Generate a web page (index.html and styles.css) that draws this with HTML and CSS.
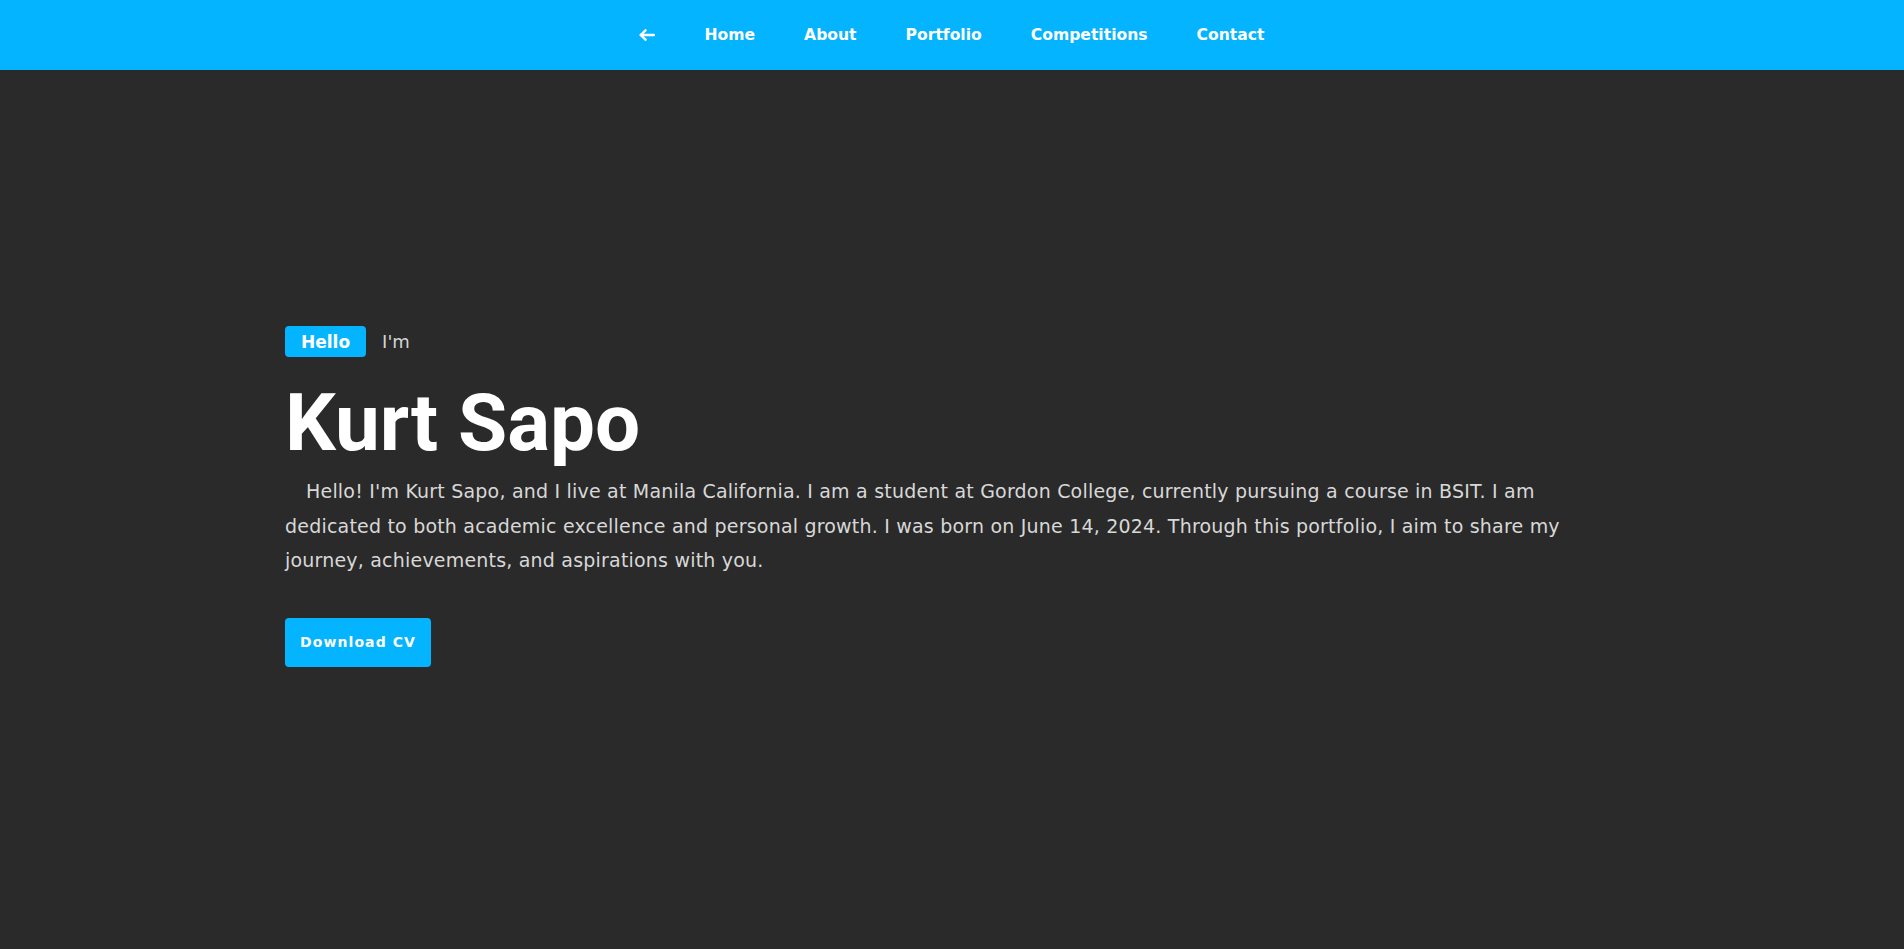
FILE: index.html
```html
<!DOCTYPE html>
<html lang="en">
<head>
<meta charset="utf-8">
<title>Kurt Sapo</title>
<link rel="stylesheet" href="styles.css">
</head>
<body>
<nav class="nav">
  <ul class="nav-list">
    <li class="nav-item nav-back">
      <svg class="back-icon" width="16" height="12" viewBox="0 0 16 12" fill="none" stroke="#ffffff" stroke-width="2.4" stroke-linecap="round" stroke-linejoin="round">
        <path d="M15 6H2"/>
        <path d="M6.5 1.3L1.6 6l4.9 4.7"/>
      </svg>
    </li>
    <li class="nav-item">Home</li>
    <li class="nav-item">About</li>
    <li class="nav-item">Portfolio</li>
    <li class="nav-item">Competitions</li>
    <li class="nav-item">Contact</li>
  </ul>
</nav>
<main class="hero">
  <div class="greeting">
    <span class="badge">Hello</span>
    <span class="im">I'm</span>
  </div>
  <h1 class="name">Kurt Sapo</h1>
  <p class="intro">Hello! I'm Kurt Sapo, and I live at Manila California. I am a student at Gordon College, currently pursuing a course in BSIT. I am dedicated to both academic excellence and personal growth. I was born on June 14, 2024. Through this portfolio, I aim to share my journey, achievements, and aspirations with you.</p>
  <button class="cv-btn">Download CV</button>
</main>
</body>
</html>
```
FILE: styles.css
```css
* {
  box-sizing: border-box;
}

html, body {
  margin: 0;
  padding: 0;
}

body {
  background: #2a2a2a;
  font-family: "DejaVu Sans", "Open Sans", sans-serif;
  min-height: 949px;
}

.nav {
  height: 70px;
  background: #04b4ff;
  display: flex;
  align-items: center;
  justify-content: center;
}

.nav-list {
  list-style: none;
  margin: 0;
  padding: 0;
  display: flex;
  align-items: center;
  gap: 49px;
}

.nav-item {
  color: #ffffff;
  font-size: 15.6px;
  font-weight: 700;
  line-height: 20px;
}

.nav-back {
  display: flex;
  align-items: center;
}

.back-icon {
  display: block;
}

.hero {
  padding: 256px 285px 0;
}

.greeting {
  display: flex;
  align-items: center;
  gap: 16px;
}

.badge {
  display: inline-flex;
  align-items: center;
  height: 31px;
  padding: 0 16px;
  background: #04b4ff;
  color: #ffffff;
  border-radius: 4px;
  font-size: 17px;
  font-weight: 700;
}

.im {
  color: #d4d4d4;
  font-size: 18px;
}

.name {
  margin: 19px 0 0;
  font-family: Roboto, "Liberation Sans", sans-serif;
  font-weight: 700;
  font-size: 80px;
  line-height: normal;
  color: #ffffff;
}

.intro {
  margin: 4px 0 0;
  max-width: 1300px;
  color: #d8d8d8;
  font-size: 19px;
  letter-spacing: 0.2px;
  line-height: 34.5px;
  text-indent: 21px;
}

.cv-btn {
  margin-top: 40px;
  width: 146px;
  height: 49px;
  border: 0;
  border-radius: 4px;
  background: #04b4ff;
  color: #ffffff;
  font-family: "DejaVu Sans", "Open Sans", sans-serif;
  font-size: 14px;
  font-weight: 700;
  letter-spacing: 1.1px;
  padding: 0;
}
```
